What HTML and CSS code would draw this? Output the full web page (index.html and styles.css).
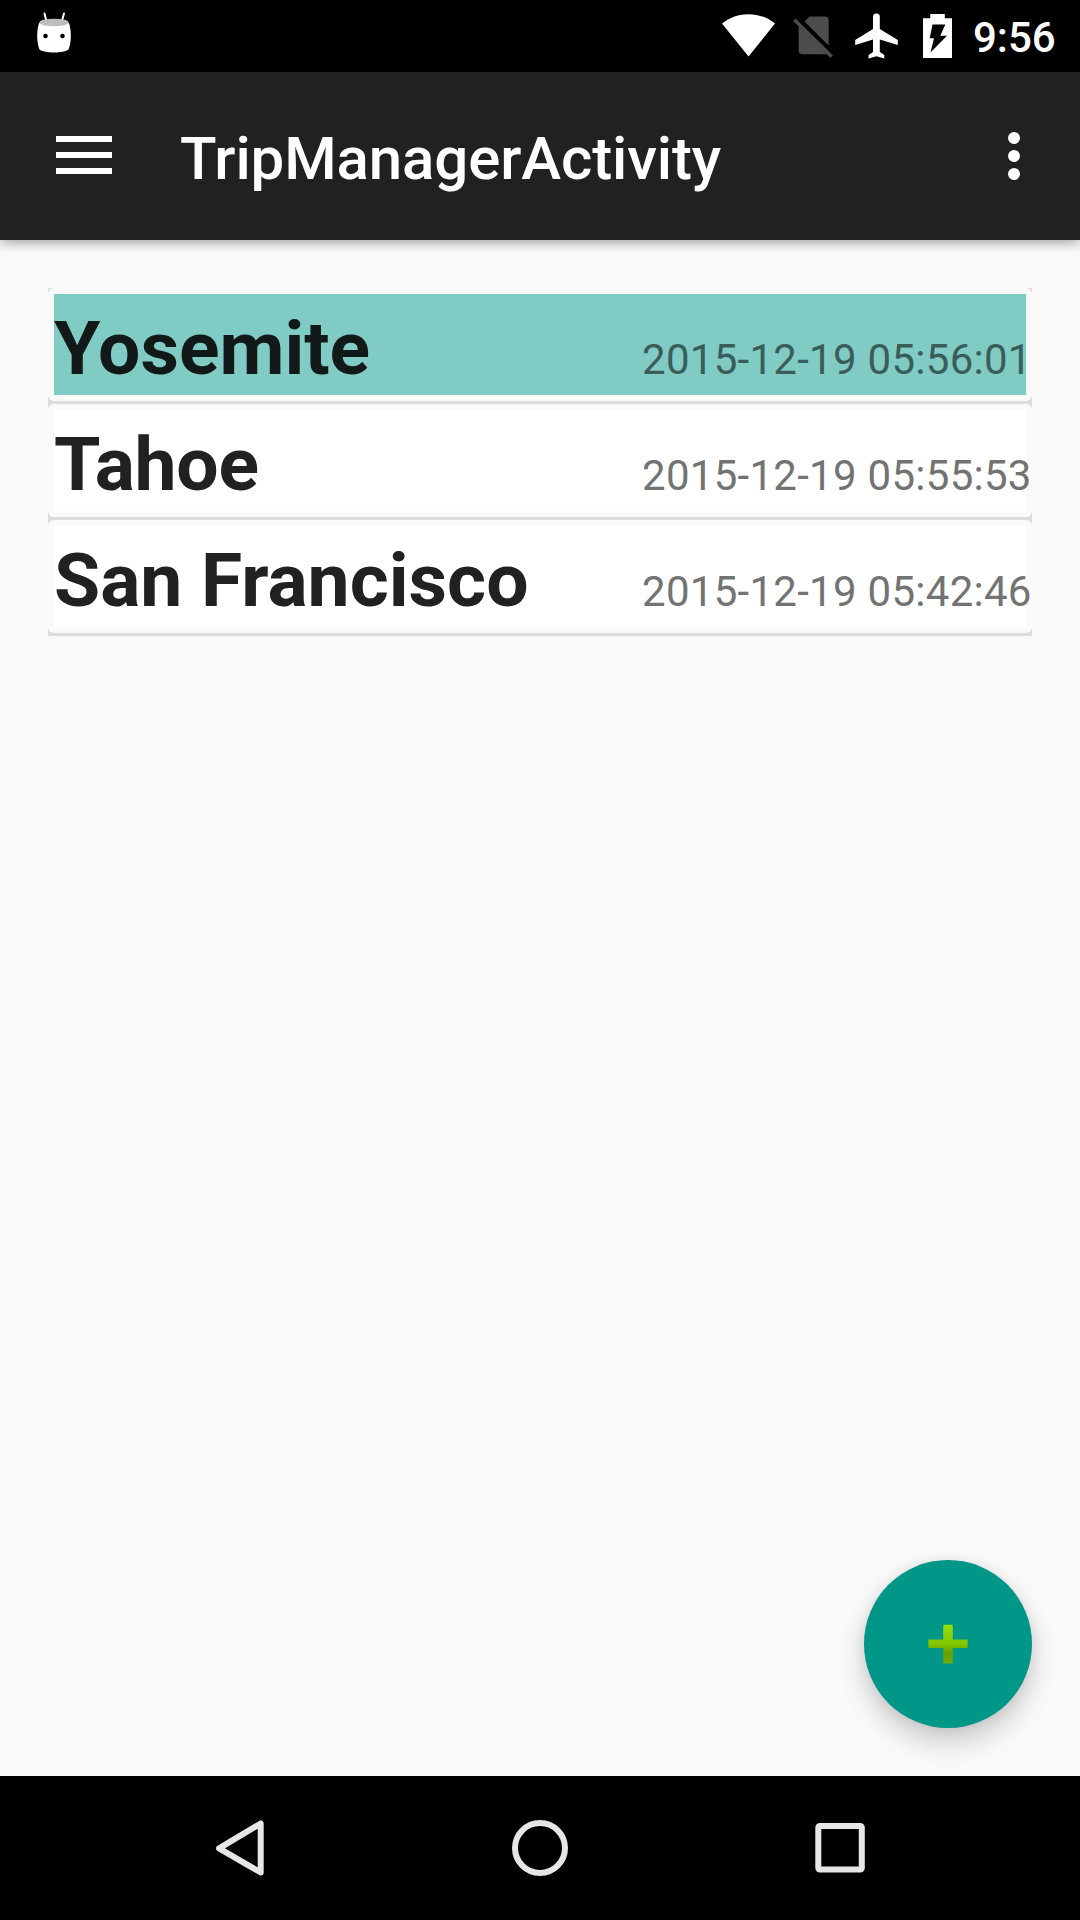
FILE: index.html
```html
<!DOCTYPE html>
<html lang="en">
<head>
<meta charset="utf-8">
<title>TripManagerActivity</title>
<link rel="stylesheet" href="styles.css">
</head>
<body>
<div class="screen">
  <div class="status-bar">
    <svg class="status-notification" width="36" height="42" viewBox="0 0 36 42">
      <path d="M8.500 1.500l2 8M28 1.500l-2.200 8" stroke="#fff" stroke-width="2" stroke-linecap="round"/>
      <path d="M3 11C.5 18 .5 31 3.500 37.500C8 41.500 28 41.500 32.500 37.500C35.500 31 35.500 18 33 11z" fill="#fff"/>
      <ellipse cx="18" cy="10.500" rx="14.700" ry="3.800" fill="#bdbdbd"/>
      <circle cx="9.500" cy="24" r="2.300"/><circle cx="26.500" cy="24" r="2.300"/>
    </svg>
    <div class="status-icons">
      <svg width="358" height="72" viewBox="700 0 358 72">
        <path d="M722 23.500C737 11 760 11 775 23.500L748.500 56.500z" fill="#fff"/>
        <g fill="#4d4d4d">
          <path d="M804.500 21.500L809.500 16.500H824.500Q828.700 16.500 828.700 20.500V45.500z"/>
          <path d="M798.700 26L827 54.200H802.500Q798.700 54.200 798.700 50.500z"/>
          <path d="M795.500 18.500L833 55.500 830.300 57.800 793.200 21z"/>
        </g>
        <path d="M873 16.800a3.400 3.400 0 0 1 6.800 0v12.200L897.800 40v5L879.800 39.500v12.400L884.300 55v3.500L876.400 56.200 868.500 58.500V55L873 51.900V39.500L855.200 45V40L873 29z" fill="#fff"/>
        <path d="M930.300 14h14.500v4.200h7.200V58H923V18.200h7.300z" fill="#fff"/>
        <path d="M932.500 24.500h12.800l-5 11.200h6.700L930.500 52.500l3.500-14.200h-4.300z"/>
      </svg>
    </div>
    <span class="clock">9:56</span>
  </div>
  <header class="app-bar">
    <svg class="menu-icon" width="56" height="38" viewBox="0 0 56 38" fill="#fff"><path d="M0 0h56v6H0zM0 16h56v6H0zM0 32h56v6H0z"/></svg>
    <h1 class="app-title">TripManagerActivity</h1>
    <svg class="more-icon" width="12" height="48" viewBox="0 0 12 48" fill="#fff"><circle cx="6" cy="6" r="6"/><circle cx="6" cy="24" r="6"/><circle cx="6" cy="42" r="6"/></svg>
  </header>
  <main class="content">
    <ul class="trips">
      <li class="trip selected"><div class="trip-card"><div class="trip-row"><span class="trip-name">Yosemite</span><span class="trip-date">2015-12-19 05:56:01</span></div></div></li>
      <li class="trip"><div class="trip-card"><div class="trip-row"><span class="trip-name tight">Tahoe</span><span class="trip-date">2015-12-19 05:55:53</span></div></div></li>
      <li class="trip"><div class="trip-card"><div class="trip-row"><span class="trip-name">San Francisco</span><span class="trip-date">2015-12-19 05:42:46</span></div></div></li>
    </ul>
    <button class="fab" aria-label="Add trip">
      <svg width="40" height="40" viewBox="0 0 40 40">
        <defs><linearGradient id="plus" x1="0" y1="0" x2="0" y2="1"><stop offset="0" stop-color="#95e000"/><stop offset=".5" stop-color="#80c400"/><stop offset=".75" stop-color="#66a000"/><stop offset="1" stop-color="#72ad10"/></linearGradient></defs>
        <path d="M16 .8h8q.8 0 .8.800V15.500h14q.8 0 .8.800v7q0 .8-.8.800h-14v14.500q0 .8-.8.800h-8q-.8 0-.8-.8V24.100H1.200q-.8 0-.8-.8v-7q0-.8.800-.8h14V1.600q0-.8.800-.8z" fill="url(#plus)"/>
      </svg>
    </button>
  </main>
  <nav class="nav-bar">
    <svg width="60" height="60" viewBox="0 0 60 60"><path d="M50.700 5.500V54.500L9 30.300z"/></svg>
    <svg width="60" height="60" viewBox="0 0 60 60"><circle cx="30" cy="30" r="25"/></svg>
    <svg width="60" height="60" viewBox="0 0 60 60"><rect x="8.300" y="8" width="43.500" height="43.500" rx="1.500"/></svg>
  </nav>
</div>
</body>
</html>
```
FILE: styles.css
```css
* { box-sizing: border-box; }
body { margin: 0; font-family: Roboto, sans-serif; }
.screen { width: 1080px; height: 1920px; display: flex; flex-direction: column; background: #fafafa; overflow: hidden; }
.status-bar { height: 72px; flex: none; background: #000; display: flex; align-items: flex-start; }
.status-notification { margin: 12px 0 0 36px; }
.status-icons { margin-left: 628px; width: 273px; height: 72px; }
.status-icons svg { display: block; }
.clock { color: #fff; font-size: 42px; font-weight: 500; line-height: 72px; padding-top: 2px; white-space: nowrap; }
.app-bar { height: 168px; flex: none; background: #212121; display: flex; align-items: flex-start; padding: 0 60px 0 56px; box-shadow: 0 2px 12px rgba(0, 0, 0, .4); z-index: 1; }
.menu-icon { margin-top: 64px; }
.app-title { margin: 0 auto 0 68px; color: #fff; font-size: 60px; font-weight: 500; line-height: 70px; letter-spacing: -.12px; padding-top: 52px; white-space: nowrap; }
.more-icon { margin-top: 60px; }
.content { flex: 1; display: flex; flex-direction: column; justify-content: space-between; padding: 48px; }
.trips { list-style: none; margin: 0; padding: 0; }
.trip { height: 116px; padding-bottom: 3px; background: #dcdcdc; }
.trip-card { height: 113px; padding: 6px; border-radius: 6px; background: #fafafa; }
.trip-row { height: 101px; display: flex; justify-content: space-between; align-items: baseline; background: #fff; color: #212121; white-space: nowrap; }
.selected .trip-row { background: #80cbc4; color: #121a19; }
.trip-name { font-size: 75px; font-weight: 700; line-height: 109px; }
.trip-name.tight { letter-spacing: -.25px; }
.trip-date { flex: none; width: 384px; font-size: 42px; line-height: 50px; letter-spacing: .28px; color: #737373; }
.selected .trip-date { color: #3b5d5a; }
.fab { align-self: flex-end; width: 168px; height: 168px; border: 0; border-radius: 50%; padding: 0; display: flex; align-items: center; justify-content: center; background: #009688; box-shadow: 0 14px 28px rgba(0, 0, 0, .2), 0 0 12px rgba(0, 0, 0, .07); }
.nav-bar { height: 144px; flex: none; background: #000; display: flex; justify-content: center; align-items: center; gap: 240px; }
.nav-bar svg { fill: none; stroke: #e6e6e6; stroke-width: 6; stroke-linejoin: round; }
```
